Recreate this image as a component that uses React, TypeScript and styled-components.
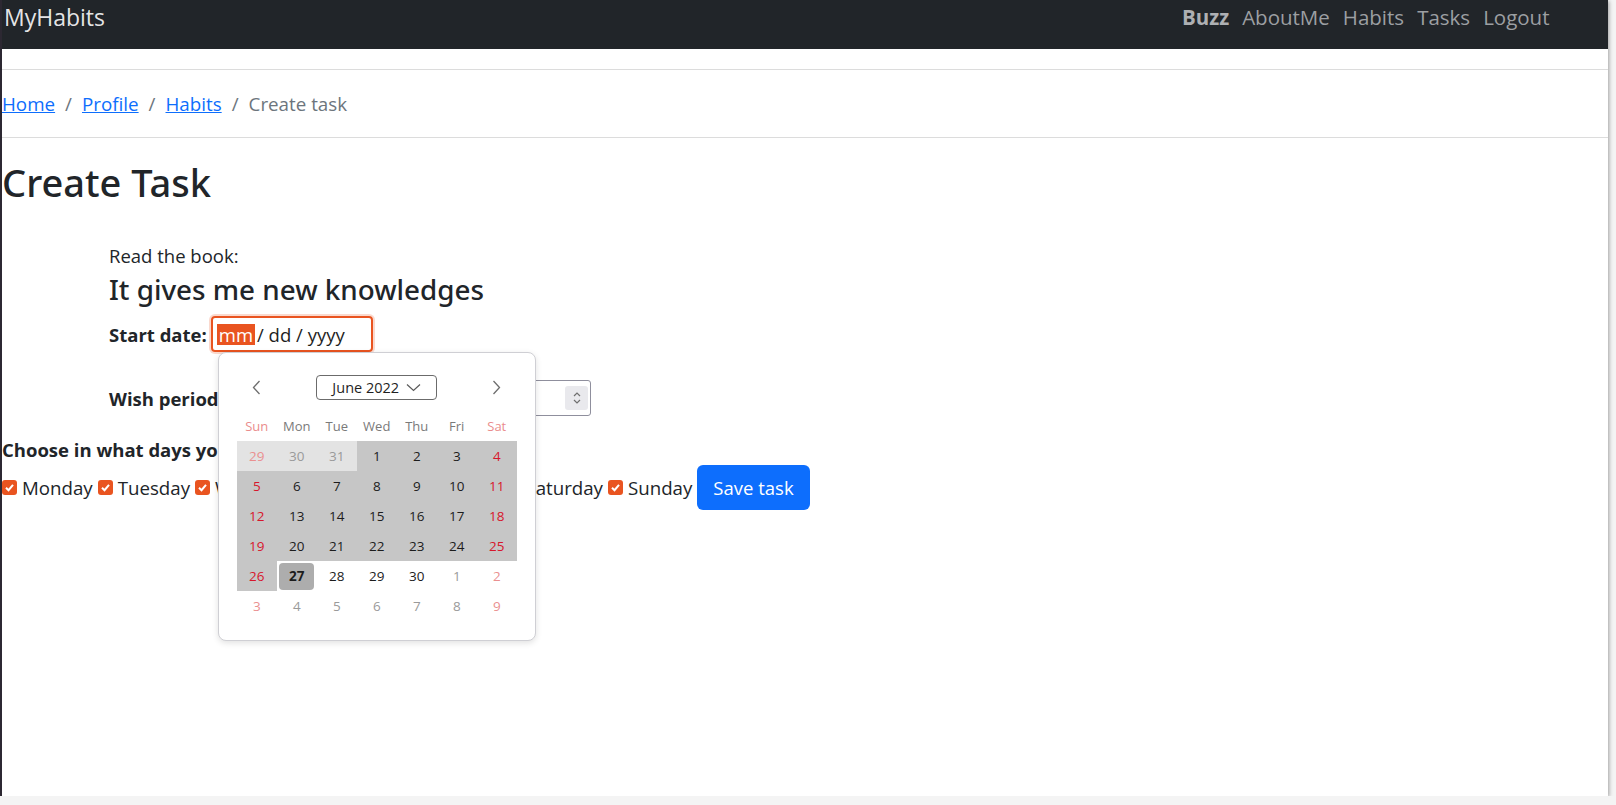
import React from 'react'
import styled, { createGlobalStyle } from 'styled-components'

const GlobalStyle = createGlobalStyle`
  html, body {
    margin: 0;
    padding: 0;
  }
  body {
    background: #f4f4f4;
    font-family: 'Open Sans', 'Noto Sans', sans-serif;
    color: #212529;
    overflow: hidden;
  }
  * {
    box-sizing: border-box;
  }
`

const Window = styled.div`
  display: flex;
  flex-direction: column;
  width: 1608px;
  height: 796px;
  background: #fff;
  border-left: 2px solid #2c2832;
  box-shadow: 1px 1px 4px rgba(0, 0, 0, 0.35);
  overflow: hidden;
`

const Navbar = styled.nav`
  display: flex;
  justify-content: space-between;
  align-items: flex-start;
  height: 49px;
  padding: 4px 52px 0 2px;
  margin-bottom: 20px;
  background: #212529;
`

const Brand = styled.div`
  font-size: 23px;
  line-height: 26px;
  color: rgba(255, 255, 255, 0.9);
`

const NavList = styled.div`
  display: flex;
  align-items: center;
`

const NavLink = styled.a<{ $strong?: boolean }>`
  padding: 0 6.5px;
  font-size: 20.5px;
  line-height: 26px;
  font-weight: ${({ $strong }) => ($strong ? 700 : 400)};
  color: ${({ $strong }) => ($strong ? '#aeb0b3' : '#9c9fa2')};
  text-decoration: none;
`

const BreadcrumbBar = styled.div`
  display: flex;
  align-items: center;
  height: 69px;
  border-top: 1px solid #dcdcdc;
  border-bottom: 1px solid #dcdcdc;
  font-size: 18.8px;
`

const Crumb = styled.a`
  color: #0d6efd;
  text-decoration: underline;
`

const CrumbSep = styled.span`
  padding: 0 10px;
  color: #6c757d;
`

const CrumbCurrent = styled.span`
  color: #6c757d;
`

const Title = styled.h1`
  margin: 22px 0 0;
  font-family: 'Noto Sans', 'Open Sans', sans-serif;
  font-size: 38px;
  line-height: 44px;
  font-weight: 500;
`

const TaskInfo = styled.div`
  display: flex;
  flex-direction: column;
  padding-left: 107px;
`

const ReadLine = styled.div`
  margin-top: 38px;
  font-size: 18.5px;
  line-height: 28px;
`

const Subtitle = styled.div`
  margin-top: 2px;
  font-family: 'Noto Sans', 'Open Sans', sans-serif;
  font-size: 27.8px;
  line-height: 34px;
  font-weight: 500;
`

const FieldRow = styled.div<{ $gap: number; $width?: number }>`
  display: flex;
  align-items: center;
  gap: 4px;
  margin-top: ${({ $gap }) => $gap}px;
  width: ${({ $width }) => ($width ? `${$width}px` : 'auto')};
  height: 36px;
`

const Label = styled.span`
  font-size: 18.5px;
  font-weight: 700;
  white-space: nowrap;
`

const DateWrap = styled.div`
  position: relative;
`

const DateField = styled.div`
  display: flex;
  align-items: center;
  width: 162px;
  height: 36px;
  padding: 0 4px;
  border: 2px solid #e95420;
  border-radius: 4px;
  box-shadow: 0 0 0 2px rgba(233, 84, 32, 0.22);
  font-size: 18.5px;
`

const Segment = styled.span<{ $active?: boolean }>`
  padding: 0 2px;
  line-height: 21px;
  background: ${({ $active }) => ($active ? '#e95420' : 'transparent')};
  color: ${({ $active }) => ($active ? '#fff' : '#1f1f1f')};
`

const NumberField = styled.div`
  display: flex;
  flex: 1;
  align-items: center;
  justify-content: flex-end;
  height: 36px;
  padding-right: 2px;
  border: 1px solid #8f8f9d;
  border-radius: 3px;
`

const Spinner = styled.span`
  display: flex;
  align-items: center;
  justify-content: center;
  width: 23px;
  height: 24px;
  background: #e9e9ed;
  border-radius: 3px;
`

const Popup = styled.div`
  position: absolute;
  top: 100%;
  left: 7px;
  z-index: 10;
  width: 318px;
  padding: 22px 18px 19px;
  background: #fff;
  border: 1px solid #cfcfd4;
  border-radius: 8px;
  box-shadow: 0 2px 6px rgba(0, 0, 0, 0.12);
`

const CalHeader = styled.div`
  display: grid;
  grid-template-columns: 40px 1fr 40px;
  align-items: center;
  height: 25px;
`

const ArrowButton = styled.span`
  display: flex;
  justify-content: center;
  align-items: center;
`

const MonthButton = styled.div`
  justify-self: center;
  display: flex;
  align-items: center;
  justify-content: center;
  gap: 7px;
  width: 121px;
  height: 25px;
  border: 1px solid #6b6b6b;
  border-radius: 4px;
  font-size: 14.5px;
  color: #1f1f1f;
`

const WeekRow = styled.div`
  display: grid;
  grid-template-columns: repeat(7, 40px);
  height: 30px;
  margin-top: 11px;
`

const WeekDay = styled.span<{ $weekend?: boolean }>`
  display: flex;
  align-items: center;
  justify-content: center;
  font-size: 13px;
  color: ${({ $weekend }) => ($weekend ? '#ea8c8c' : '#7a7a7a')};
`

const DayGrid = styled.div`
  display: grid;
  grid-template-columns: repeat(7, 40px);
  grid-auto-rows: 30px;
`

type Tone = 'none' | 'light' | 'range'

const toneBg: Record<Tone, string> = {
  none: 'transparent',
  light: '#e3e3e3',
  range: '#c6c6c6',
}

const DayCell = styled.div<{ $tone: Tone; $outside: boolean; $weekend: boolean }>`
  display: flex;
  align-items: center;
  justify-content: center;
  font-size: 13.5px;
  font-weight: ${({ $outside }) => ($outside ? 400 : 500)};
  background: ${({ $tone }) => toneBg[$tone]};
  color: ${({ $outside, $weekend }) =>
    $outside ? ($weekend ? '#ea9090' : '#9a9a9a') : $weekend ? '#d7162c' : '#1c1c1c'};
`

const TodayBox = styled.span`
  display: flex;
  align-items: center;
  justify-content: center;
  width: 35px;
  height: 27px;
  border-radius: 4px;
  background: #adadad;
  font-weight: 700;
`

const ChooseLine = styled.div`
  margin-top: 20px;
  font-size: 18.5px;
  line-height: 28px;
  font-weight: 700;
`

const DaysRow = styled.div`
  display: flex;
  align-items: center;
  gap: 5px;
  margin-top: 1px;
  font-size: 18.7px;
`

const DayOption = styled.label`
  display: inline-flex;
  align-items: center;
  gap: 5px;
  white-space: nowrap;
`

const CheckBox = styled.span`
  display: inline-flex;
  align-items: center;
  justify-content: center;
  width: 15px;
  height: 15px;
  border-radius: 3px;
  background: #e95420;
`

const SaveButton = styled.button`
  height: 45px;
  padding: 0 16px;
  border: none;
  border-radius: 6px;
  background: #0d6efd;
  color: #fff;
  font-family: inherit;
  font-size: 18.5px;
`

const Chevron = ({ dir }: { dir: 'left' | 'right' }) => (
  <svg width="9" height="15" viewBox="0 0 9 15">
    <polyline
      points={dir === 'left' ? '7.5,1 1.5,7.5 7.5,14' : '1.5,1 7.5,7.5 1.5,14'}
      fill="none"
      stroke="#6e6e6e"
      strokeWidth="1.3"
    />
  </svg>
)

const DownChevron = () => (
  <svg width="15" height="9" viewBox="0 0 15 9">
    <polyline points="1,1.5 7.5,7.5 14,1.5" fill="none" stroke="#5a5a5a" strokeWidth="1.2" />
  </svg>
)

const SpinIcon = () => (
  <svg width="10" height="14" viewBox="0 0 10 14">
    <polyline points="2,5 5,2 8,5" fill="none" stroke="#6f6f6f" strokeWidth="1.2" />
    <polyline points="2,9 5,12 8,9" fill="none" stroke="#6f6f6f" strokeWidth="1.2" />
  </svg>
)

const CheckMark = () => (
  <svg width="11" height="11" viewBox="0 0 11 11">
    <polyline points="2,5.8 4.5,8.2 9,2.8" fill="none" stroke="#fff" strokeWidth="2" />
  </svg>
)

const weekDays = ['Sun', 'Mon', 'Tue', 'Wed', 'Thu', 'Fri', 'Sat']

// июнь 2022: 29 мая .. 9 июля
const cells = Array.from({ length: 42 }, (_, i) => {
  let day: number
  let outside = false
  if (i < 3) {
    day = 29 + i
    outside = true
  } else if (i < 33) {
    day = i - 2
  } else {
    day = i - 32
    outside = true
  }
  const tone: Tone = i < 3 ? 'light' : i <= 28 ? 'range' : 'none'
  const col = i % 7
  return { day, outside, tone, weekend: col === 0 || col === 6, today: i === 29 }
})

const days = ['Monday', 'Tuesday', 'Wednesday', 'Thursday', 'Friday', 'Saturday', 'Sunday']

const App = () => {
  return (
    <>
      <GlobalStyle />
      <Window>
        <Navbar>
          <Brand>MyHabits</Brand>
          <NavList>
            <NavLink $strong>Buzz</NavLink>
            <NavLink>AboutMe</NavLink>
            <NavLink>Habits</NavLink>
            <NavLink>Tasks</NavLink>
            <NavLink>Logout</NavLink>
          </NavList>
        </Navbar>

        <BreadcrumbBar>
          <Crumb>Home</Crumb>
          <CrumbSep>/</CrumbSep>
          <Crumb>Profile</Crumb>
          <CrumbSep>/</CrumbSep>
          <Crumb>Habits</Crumb>
          <CrumbSep>/</CrumbSep>
          <CrumbCurrent>Create task</CrumbCurrent>
        </BreadcrumbBar>

        <Title>Create Task</Title>

        <TaskInfo>
          <ReadLine>Read the book:</ReadLine>
          <Subtitle>It gives me new knowledges</Subtitle>

          <FieldRow $gap={10}>
            <Label>Start date:</Label>
            <DateWrap>
              <DateField>
                <Segment $active>mm</Segment>
                <Segment>/ dd / yyyy</Segment>
              </DateField>

              {/* открытый календарь поверх формы */}
              <Popup>
                <CalHeader>
                  <ArrowButton>
                    <Chevron dir="left" />
                  </ArrowButton>
                  <MonthButton>
                    June 2022
                    <DownChevron />
                  </MonthButton>
                  <ArrowButton>
                    <Chevron dir="right" />
                  </ArrowButton>
                </CalHeader>
                <WeekRow>
                  {weekDays.map((d, i) => (
                    <WeekDay key={d} $weekend={i === 0 || i === 6}>
                      {d}
                    </WeekDay>
                  ))}
                </WeekRow>
                <DayGrid>
                  {cells.map((c, i) => (
                    <DayCell key={i} $tone={c.tone} $outside={c.outside} $weekend={c.weekend}>
                      {c.today ? <TodayBox>{c.day}</TodayBox> : c.day}
                    </DayCell>
                  ))}
                </DayGrid>
              </Popup>
            </DateWrap>
          </FieldRow>

          <FieldRow $gap={28} $width={482}>
            <Label>Wish period (days):</Label>
            <NumberField>
              <Spinner>
                <SpinIcon />
              </Spinner>
            </NumberField>
          </FieldRow>
        </TaskInfo>

        <ChooseLine>Choose in what days you want to do it:</ChooseLine>
        <DaysRow>
          {days.map(d => (
            <DayOption key={d}>
              <CheckBox>
                <CheckMark />
              </CheckBox>
              {d}
            </DayOption>
          ))}
          <SaveButton>Save task</SaveButton>
        </DaysRow>
      </Window>
    </>
  )
}

export default App
